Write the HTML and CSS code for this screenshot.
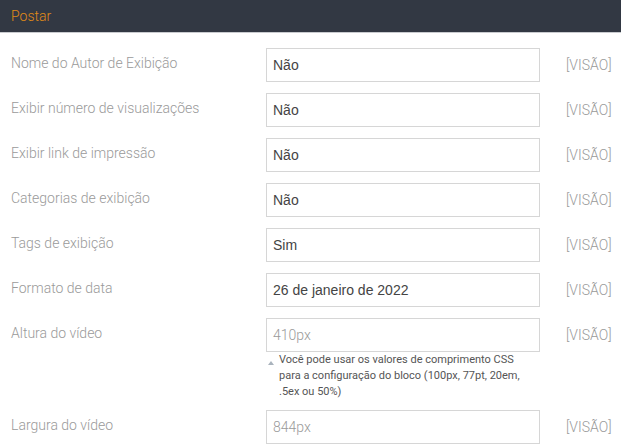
FILE: index.html
```html
<!DOCTYPE html>
<html lang="pt">
<head>
  <meta charset="UTF-8">
  <title>Postar</title>
  <link rel="stylesheet" href="styles.css">
</head>
<body>

  <div class="panel-head">Postar</div>

  <div class="settings">
    <div class="row">
      <div class="label">Nome do Autor de Exibição</div>
      <div class="field"><div class="input">Não</div></div>
      <div class="scope">[VISÃO]</div>
    </div>
    <div class="row">
      <div class="label">Exibir número de visualizações</div>
      <div class="field"><div class="input">Não</div></div>
      <div class="scope">[VISÃO]</div>
    </div>
    <div class="row">
      <div class="label">Exibir link de impressão</div>
      <div class="field"><div class="input">Não</div></div>
      <div class="scope">[VISÃO]</div>
    </div>
    <div class="row">
      <div class="label">Categorias de exibição</div>
      <div class="field"><div class="input">Não</div></div>
      <div class="scope">[VISÃO]</div>
    </div>
    <div class="row">
      <div class="label">Tags de exibição</div>
      <div class="field"><div class="input">Sim</div></div>
      <div class="scope">[VISÃO]</div>
    </div>
    <div class="row">
      <div class="label">Formato de data</div>
      <div class="field"><div class="input">26 de janeiro de 2022</div></div>
      <div class="scope">[VISÃO]</div>
    </div>
    <div class="row">
      <div class="label">Altura do vídeo</div>
      <div class="field">
        <div class="input text">410px</div>
        <div class="hint">Você pode usar os valores de comprimento CSS para a configuração do bloco (100px, 77pt, 20em, .5ex ou 50%)</div>
      </div>
      <div class="scope">[VISÃO]</div>
    </div>
    <div class="row">
      <div class="label">Largura do vídeo</div>
      <div class="field"><div class="input text">844px</div></div>
      <div class="scope">[VISÃO]</div>
    </div>
  </div>

</body>
</html>
```

FILE: styles.css
```css
* {
  box-sizing: border-box;
}

body {
  margin: 0;
  font-family: Roboto, "Liberation Sans", sans-serif;
  background: #fff;
}

.panel-head {
  height: 33px;
  padding: 6px 11px 0;
  background: #323843;
  border-bottom: 1px solid #c9cbcf;
  color: #e08a17;
  font-size: 14px;
  font-weight: 300;
  line-height: 20px;
}

.settings {
  padding-top: 15px;
}

.row {
  display: flex;
  align-items: flex-start;
  margin-bottom: 11px;
}

.label {
  width: 266px;
  padding: 5px 0 0 11px;
  color: #9a9a9a;
  font-size: 14px;
  font-weight: 300;
  line-height: 20px;
}

.field {
  width: 274px;
}

.input {
  height: 34px;
  padding: 0 6px;
  border: 1px solid #d6d6d6;
  color: #444;
  font-family: "Liberation Sans", Arial, sans-serif;
  font-size: 14px;
  line-height: 33px;
}

.input.text {
  color: #9a9a9a;
  font-family: Roboto, sans-serif;
  font-weight: 300;
}

.hint {
  position: relative;
  margin-bottom: -1px;
  padding: 0 10px 0 13px;
  color: #555;
  font-size: 11px;
  line-height: 16px;
}

.hint::before {
  content: "";
  position: absolute;
  left: 2px;
  top: 9px;
  border-left: 3px solid transparent;
  border-right: 3px solid transparent;
  border-bottom: 4px solid #a9b3bd;
}

.scope {
  margin-left: 26px;
  padding-top: 7px;
  color: #9a9a9a;
  font-size: 14px;
  font-weight: 300;
  line-height: 20px;
}
```
